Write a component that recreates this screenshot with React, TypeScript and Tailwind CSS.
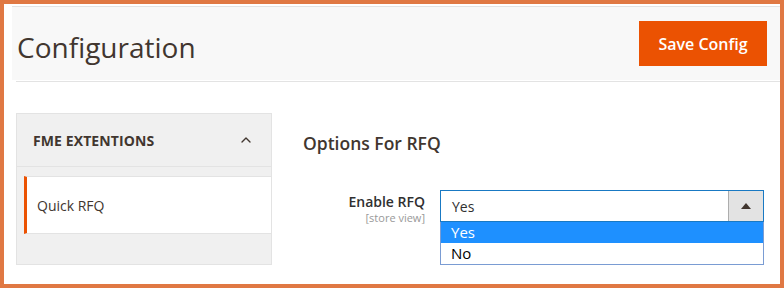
import { ChevronUp } from "lucide-react";

const font = { fontFamily: '"Open Sans", "Liberation Sans", sans-serif' };

function Sidebar() {
  return (
    <div className="w-[256px] border border-[#e3e3e3] bg-[#f0f0f0] pb-[12px]">
      <div className="flex h-[53px] items-center justify-between border-b border-[#e3e3e3] pl-[16px] pr-[17px]">
        <span className="text-[14px] font-bold tracking-[0.1px] text-[#41362f]">FME EXTENTIONS</span>
        <ChevronUp className="h-[16px] w-[16px] text-[#41362f]" strokeWidth={2} />
      </div>
      <div className="mt-[9px] ml-[7px] flex h-[58px] items-center border-y border-[#e3e3e3] border-l-[3px] border-l-[#eb5202] bg-white pl-[10px]">
        <span className="text-[14px] text-[#41362f]">Quick RFQ</span>
      </div>
    </div>
  );
}

function SelectField() {
  return (
    <div className="w-[324px]">
      <div className="flex h-[32px] border border-[#1979c3] bg-white">
        <div className="flex flex-1 items-center pl-[11px] text-[14px] text-[#303030]">Yes</div>
        <div className="flex w-[35px] items-center justify-center border-l border-[#adadad] bg-[#e3e3e3]">
          <span className="h-0 w-0 border-x-[5px] border-b-[6px] border-x-transparent border-b-[#41362f]" />
        </div>
      </div>
      <div className="border border-t-0 border-[#7a9cd3] bg-white text-[15px]">
        <div className="flex h-[21px] items-center bg-[#1e90ff] pl-[10px] text-white">Yes</div>
        <div className="flex h-[21px] items-center pl-[10px] text-black">No</div>
      </div>
    </div>
  );
}

export default function App() {
  return (
    <div className="h-[288px] w-[784px] overflow-hidden border-4 border-[#e07843] bg-white" style={font}>
      <div className="ml-[8px] mt-[2px] flex h-[74px] items-center justify-between border-t border-[#e3e3e3] bg-[#f8f8f8] pl-[5px] pr-[13px]">
        <h1 className="mt-[6px] text-[28px] font-normal leading-none text-[#41362f]">Configuration</h1>
        <button className="h-[45px] w-[128px] bg-[#eb5202] text-[16px] font-semibold text-white">Save Config</button>
      </div>
      <div className="ml-[12px] mt-[1px] h-[1px] bg-[#e3e3e3]" />
      <div className="ml-[12px] mt-[31px] flex">
        <Sidebar />
        <div className="ml-[31px] flex-1">
          <h2 className="mt-[19px] text-[17.5px] font-semibold leading-[22px] text-[#41362f]">Options For RFQ</h2>
          <div className="mt-[36px] flex">
            <div className="flex w-[122px] flex-col items-end pt-[3px]">
              <span className="text-[14px] font-semibold leading-[18px] text-[#303030]">Enable RFQ</span>
              <span className="text-[11px] leading-[14px] text-[#999]">[store view]</span>
            </div>
            <div className="ml-[15px]">
              <SelectField />
            </div>
          </div>
        </div>
      </div>
    </div>
  );
}
